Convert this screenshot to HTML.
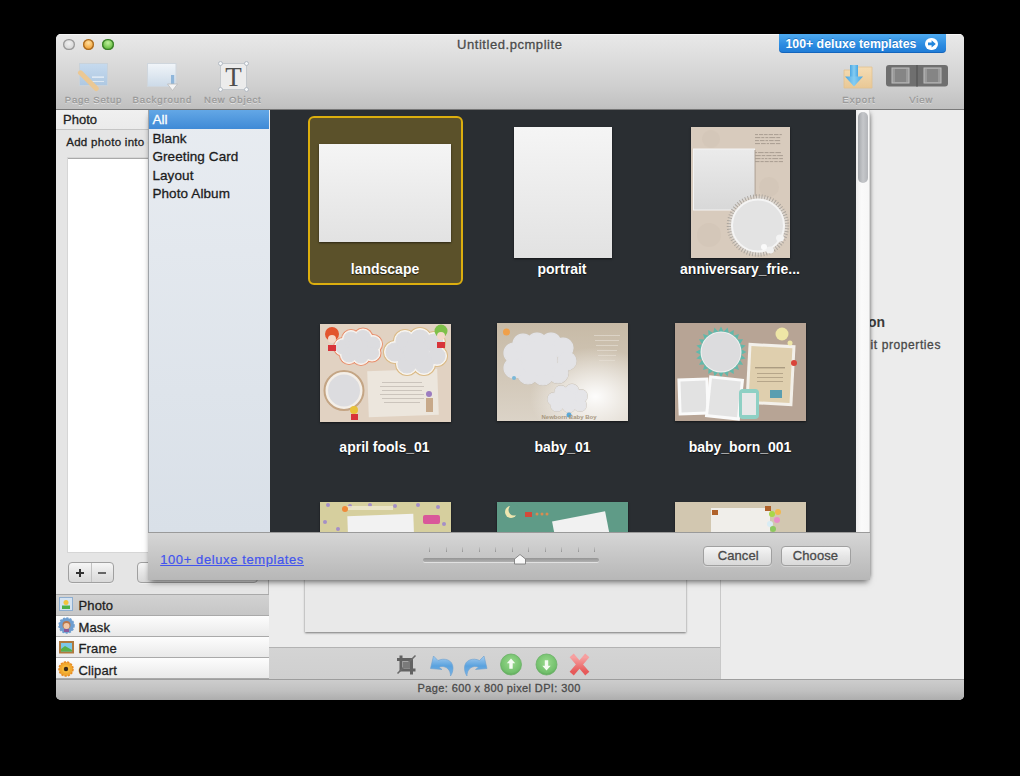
<!DOCTYPE html>
<html><head><meta charset="utf-8"><style>
*{margin:0;padding:0;box-sizing:border-box}
html,body{width:1020px;height:776px;overflow:hidden;background:#000;font-family:"Liberation Sans",sans-serif}
.a{position:absolute}
.t{white-space:nowrap}
.sk{-webkit-text-stroke:.3px currentColor}
.tl{width:11.5px;height:11.5px;border-radius:50%}
.lbl{color:#a3a3a3;text-shadow:0 1px 0 rgba(255,255,255,.7)}
.acc{left:56px;width:213px;background:linear-gradient(#fdfdfd,#f3f3f3 50%,#e9e9e9);border-bottom:1px solid #a9a9a9}
.blank{background:linear-gradient(#f5f5f5,#e2e2e2);box-shadow:0 1px 2px rgba(0,0,0,.55)}
.thumb{box-shadow:0 1px 2px rgba(0,0,0,.55)}
.tlab{text-shadow:0 1px 1px rgba(0,0,0,.7)}
.btn{height:21px;border:1px solid #a0a0a0;border-radius:4px;background:linear-gradient(#f6f6f6,#e6e6e6 50%,#d9d9d9);box-shadow:0 1px 0 rgba(255,255,255,.35)}
</style></head><body>
<div class="a" style="left:56px;top:34px;width:908px;height:665.5px;background:#ececec;border-radius:5px 5px 5px 5px;overflow:hidden">
<div class="a" style="left:0;top:0;width:908px;height:76px;background:linear-gradient(#e9e9e9,#dedede 30%,#cfcfcf 70%,#c0c0c0);border-bottom:1px solid #7a7a7a;box-shadow:inset 0 1px 0 rgba(255,255,255,.55)"></div>
<div class="a" style="left:0;top:645px;width:908px;height:21px;background:linear-gradient(#cdcdcd,#c0c0c0 55%,#adadad);border-top:1px solid #9d9d9d"></div>
</div>
<div class="a tl" style="left:63.45px;top:38.9px;background:radial-gradient(circle at 50% 40%,#f0f0f0,#d8d8d8 60%,#c4c4c4);box-shadow:inset 0 0 0 1.3px #9a9a9a"></div>
<div class="a tl" style="left:82.75px;top:38.9px;background:radial-gradient(circle at 50% 35%,#ffe0a0,#f4ac48 55%,#e0902a);box-shadow:inset 0 0 0 1.3px #a86a22"></div>
<div class="a tl" style="left:102.25px;top:38.9px;background:radial-gradient(circle at 50% 35%,#bff09c,#72c44c 55%,#55a636);box-shadow:inset 0 0 0 1.3px #3a7e2a"></div>
<div class="a t sk" style="left:457.00px;top:38.40px;font-size:13px;line-height:13px;color:#4a4a4a;letter-spacing:0.55px;text-shadow:0 1px 0 rgba(255,255,255,.5)">Untitled.pcmplite</div>

<div class="a" style="left:779px;top:34px;width:167px;height:19px;border-radius:0 0 4px 4px;background:linear-gradient(#4eaaf0,#2a8ae0 60%,#1f7bd6);box-shadow:inset 0 -1px 0 rgba(0,60,140,.35)"></div>
<div class="a t" style="left:785.50px;top:37.79px;font-size:12.3px;line-height:12.3px;color:#fff;font-weight:bold;text-shadow:0 -1px 0 rgba(0,60,140,.4)">100+ deluxe templates</div>

<div class="a" style="left:925px;top:37.5px;width:12.5px;height:12.5px;border-radius:50%;background:#fff"></div>
<svg class="a" style="left:926.5px;top:39px" width="10" height="10" viewBox="0 0 10 10"><path d="M1 3.6h3.6V1.2L8.8 4.9 4.6 8.6V6.2H1z" fill="#2386dc"/></svg>
<svg class="a" style="left:76px;top:60px" width="36" height="32" viewBox="0 0 36 32">
<defs><linearGradient id="ps" x1="0" y1="0" x2="0" y2="1"><stop offset="0" stop-color="#c6daee"/><stop offset="1" stop-color="#aec8e2"/></linearGradient></defs>
<rect x="3.5" y="3.5" width="28" height="22" fill="url(#ps)" stroke="#c9d2da"/>
<rect x="16" y="16.5" width="12" height="1.2" fill="#eef4fa"/><rect x="16" y="21" width="12" height="1" fill="#dde8f2"/>
<path d="M4.5 12.8 L20.2 28.6" stroke="#ebc894" stroke-width="5" stroke-linecap="round"/>
</svg>
<svg class="a" style="left:144px;top:60px" width="36" height="34" viewBox="0 0 36 34">
<defs><linearGradient id="bgi" x1="0" y1="0" x2="0" y2="1"><stop offset="0" stop-color="#f1f5f9"/><stop offset="1" stop-color="#ccdae8"/></linearGradient></defs>
<rect x="3.5" y="3.5" width="28.5" height="23" fill="url(#bgi)" stroke="#cfd6dd"/>
<rect x="27" y="15" width="3.2" height="10" fill="#8fb6da"/>
<path d="M23.5 24h10l-5 6.5z" fill="#f4f4f4" stroke="#b9b9b9" stroke-width=".8"/>
</svg>
<svg class="a" style="left:216px;top:59px" width="36" height="35" viewBox="0 0 36 35">
<rect x="4.5" y="4.5" width="26" height="26" fill="#ececec" stroke="#c4c8cc"/>
<text x="17.5" y="26.5" text-anchor="middle" font-family="Liberation Serif" font-size="27" fill="#4e4e4e">T</text>
<g fill="#f6f8fa" stroke="#aeb6be" stroke-width=".9"><circle cx="4.5" cy="4.5" r="2"/><circle cx="30.5" cy="4.5" r="2"/><circle cx="4.5" cy="30.5" r="2"/><circle cx="30.5" cy="30.5" r="2"/></g>
</svg>
<svg class="a" style="left:842px;top:63px" width="36" height="28" viewBox="0 0 36 28">
<defs><linearGradient id="fo" x1="0" y1="0" x2="0" y2="1"><stop offset="0" stop-color="#f4dcb4"/><stop offset="1" stop-color="#e9c895"/></linearGradient></defs>
<path d="M2 7h10l2 -3h16v21H2z" fill="url(#fo)" stroke="#e2c191" stroke-width=".8"/>
<defs><linearGradient id="ar" x1="0" y1="0" x2="1" y2="0"><stop offset="0" stop-color="#4aa6e2"/><stop offset=".5" stop-color="#86cdf2"/><stop offset="1" stop-color="#4aa6e2"/></linearGradient></defs><rect x="8" y="2" width="8" height="12" fill="url(#ar)"/><path d="M3 13.5h18l-9 10z" fill="url(#ar)"/>
</svg>
<svg class="a" style="left:885px;top:64px" width="64" height="24" viewBox="0 0 64 24">
<rect x="1" y="1" width="62" height="21.5" rx="3" fill="#6f6f6f"/>
<rect x="31" y="1" width="2" height="21.5" fill="#5e5e5e"/>
<rect x="7" y="4" width="17" height="15" fill="#9a9a9a" stroke="#bdbdbd" stroke-width="1"/><rect x="10" y="5" width="11" height="13" fill="#858585"/>
<rect x="39" y="4" width="17" height="15" fill="#9a9a9a" stroke="#bdbdbd" stroke-width="1"/><rect x="42" y="5" width="11" height="13" fill="#858585"/>
</svg>
<div class="a t sk" style="left:64.80px;top:94.56px;font-size:9.5px;line-height:9.5px;color:#999999;letter-spacing:0.75px;text-shadow:0 1px 0 rgba(255,255,255,.7)">Page Setup</div>

<div class="a t sk" style="left:132.50px;top:94.56px;font-size:9.5px;line-height:9.5px;color:#999999;letter-spacing:0.9px;text-shadow:0 1px 0 rgba(255,255,255,.7)">Background</div>

<div class="a t sk" style="left:204.00px;top:94.56px;font-size:9.5px;line-height:9.5px;color:#999999;letter-spacing:0.85px;text-shadow:0 1px 0 rgba(255,255,255,.7)">New Object</div>

<div class="a t sk" style="left:842.30px;top:94.56px;font-size:9.5px;line-height:9.5px;color:#999999;letter-spacing:1.0px;text-shadow:0 1px 0 rgba(255,255,255,.7)">Export</div>

<div class="a t sk" style="left:909.30px;top:94.56px;font-size:9.5px;line-height:9.5px;color:#999999;letter-spacing:0.9px;text-shadow:0 1px 0 rgba(255,255,255,.7)">View</div>

<div class="a" style="left:56px;top:110px;width:213px;height:484px;background:#e5e5e5;border-right:1px solid #b5b5b5"></div>
<div class="a" style="left:56px;top:110px;width:213px;height:20px;background:linear-gradient(#f0f0f0,#ebebeb);border-bottom:1px solid #c5c5c5"></div>
<div class="a t sk" style="left:63.00px;top:113.00px;font-size:13px;line-height:13px;color:#222;">Photo</div>

<div class="a t sk" style="left:66.20px;top:137.27px;font-size:11.5px;line-height:11.5px;color:#222;letter-spacing:0.3px;">Add photo into current page</div>

<div class="a" style="left:68px;top:158px;width:189px;height:394px;background:#fff;border-top:1px solid #a9a9a9;box-shadow:0 0 0 1px #d6d6d6"></div>
<div class="a btn" style="left:68px;top:562px;width:46px;height:21px"></div>
<div class="a" style="left:91px;top:563px;width:1px;height:19px;background:#c2c2c2"></div>
<div class="a" style="left:76px;top:571.5px;width:8px;height:2px;background:#333"></div><div class="a" style="left:79px;top:568.5px;width:2px;height:8px;background:#333"></div>
<div class="a" style="left:98px;top:571.5px;width:8px;height:2px;background:#666"></div>
<div class="a btn" style="left:137px;top:562px;width:121px;height:21px"></div>
<div class="a" style="left:56px;top:594px;width:213px;height:1px;background:#a9a9a9"></div>
<div class="a acc" style="top:595px;height:21px;background:linear-gradient(#d2d2d2,#c6c6c6)"></div>
<div class="a t sk" style="left:78.50px;top:599.00px;font-size:13px;line-height:13px;color:#1f1f1f;letter-spacing:0.15px;">Photo</div>

<div class="a acc" style="top:616px;height:21px;"></div>
<div class="a t sk" style="left:78.50px;top:620.50px;font-size:13px;line-height:13px;color:#1f1f1f;letter-spacing:0.15px;">Mask</div>

<div class="a acc" style="top:637px;height:21px;"></div>
<div class="a t sk" style="left:78.50px;top:642.00px;font-size:13px;line-height:13px;color:#1f1f1f;letter-spacing:0.15px;">Frame</div>

<div class="a acc" style="top:658px;height:21px;"></div>
<div class="a t sk" style="left:78.50px;top:664.00px;font-size:13px;line-height:13px;color:#1f1f1f;letter-spacing:0.15px;">Clipart</div>

<svg class="a" style="left:58px;top:596px" width="16" height="16" viewBox="0 0 16 16"><rect x="1.5" y="1.5" width="13" height="13" fill="#d5e3f1" stroke="#8eaed0"/><circle cx="8" cy="6.5" r="2.5" fill="#f2c43a"/><rect x="4" y="9.5" width="8" height="3.5" fill="#4cb04a"/></svg>
<svg class="a" style="left:58px;top:617px" width="17" height="17" viewBox="0 0 17 17"><circle cx="8.5" cy="8.5" r="7.5" fill="#6e9ed0" stroke="#6e9ed0" stroke-width="1.5" stroke-dasharray="2 1.5"/><circle cx="8.5" cy="8" r="4" fill="#b8764a"/><circle cx="8.5" cy="9" r="3" fill="#f0c8a8"/><rect x="6" y="12" width="5" height="3" fill="#8a5a9a"/></svg>
<svg class="a" style="left:58px;top:640px" width="17" height="15" viewBox="0 0 17 15"><rect x="1" y="1" width="15" height="12.5" fill="#b07a3e"/><rect x="3" y="3" width="11" height="8.5" fill="#7cc8e8"/><path d="M3 9l4-3 7 4v1.5H3z" fill="#58b048"/></svg>
<svg class="a" style="left:58px;top:661px" width="16" height="16" viewBox="0 0 16 16"><circle cx="8" cy="8" r="7" fill="#f0a830" stroke="#e88a20" stroke-width="1.5" stroke-dasharray="2.2 1.2"/><circle cx="8" cy="8" r="4" fill="#f6b83a"/><circle cx="8" cy="8" r="2.2" fill="#3a2a1a"/></svg>
<div class="a" style="left:269px;top:110px;width:451px;height:537px;background:#ececec"></div>
<div class="a" style="left:305px;top:120px;width:381px;height:512px;background:#e9e9e9;box-shadow:0 1px 2px rgba(0,0,0,.5)"></div>
<div class="a" style="left:269px;top:647px;width:451px;height:32px;background:linear-gradient(#d4d4d4,#cfcfcf);border-top:1px solid #b3b3b3"></div>
<svg class="a" style="left:394px;top:652px" width="200" height="26" viewBox="0 0 200 26">
<defs>
<radialGradient id="gr" cx=".5" cy=".4" r=".6"><stop offset="0" stop-color="#9ada8e"/><stop offset=".8" stop-color="#72c06c"/><stop offset="1" stop-color="#5fa85a"/></radialGradient>
<linearGradient id="bl" x1="0" y1="0" x2="0" y2="1"><stop offset="0" stop-color="#a6cdf0"/><stop offset=".5" stop-color="#5aa2de"/><stop offset="1" stop-color="#7ab4e6"/></linearGradient>
<linearGradient id="rd" x1="0" y1="0" x2="0" y2="1"><stop offset="0" stop-color="#f6a0a0"/><stop offset="1" stop-color="#e65a5a"/></linearGradient>
</defs>
<g fill="none" stroke="#626262" stroke-width="3"><path d="M7 3.5v14.5h14.5"/><path d="M3 7.5h14.5v15"/></g><path d="M3.5 21.5L21.5 3.5" stroke="#6a6a6a" stroke-width="1.6"/><rect x="9" y="9.5" width="7" height="7" fill="#7a7a7a"/>
<path d="M36.5 16.5L39.5 4L44 8.5C50 5.5 59 7.5 59 16C59 19 58 22 56.5 24C56.5 20 55 15.5 49 14.5C47.5 14.3 46 14.8 45 15.3L48 17.5Z" fill="url(#bl)" stroke="#6aa0d0" stroke-width=".6"/>
<path d="M93 16.5L90 4L85.5 8.5C79.5 5.5 70.5 7.5 70.5 16C70.5 19 71.5 22 73 24C73 20 74.5 15.5 80.5 14.5C82 14.3 83.5 14.8 84.5 15.3L81.5 17.5Z" fill="url(#bl)" stroke="#6aa0d0" stroke-width=".6"/>
<circle cx="117" cy="12.5" r="10.5" fill="url(#gr)" stroke="#6ab066" stroke-width=".8"/><path d="M117 6.5l4.2 4.8h-2.5v5.5h-3.4v-5.5h-2.5z" fill="#f4fbf2"/>
<circle cx="152.5" cy="12.5" r="10.5" fill="url(#gr)" stroke="#6ab066" stroke-width=".8"/><path d="M152.5 18.5l4.2-4.8h-2.5v-5.5h-3.4v5.5h-2.5z" fill="#f4fbf2"/>
<g stroke="url(#rd)" stroke-width="5.5" stroke-linecap="square"><path d="M179.5 5.5l12 14M191.5 5.5l-12 14"/></g>
</svg>
<div class="a" style="left:720px;top:110px;width:244px;height:569px;background:#ececec;border-left:1px solid #c8c8c8"></div>
<div class="a t" style="left:685.00px;width:200px;text-align:right;top:315.35px;font-size:14px;line-height:14px;color:#3a3a3a;font-weight:bold;">No Selection</div>

<div class="a t sk" style="left:641.00px;width:300px;text-align:right;top:339.34px;font-size:12px;line-height:12px;color:#484848;letter-spacing:0.6px;">Select an object to edit properties</div>

<div class="a t sk" style="left:417.60px;top:683.09px;font-size:11px;line-height:11px;color:#4a4a4a;letter-spacing:0.38px;">Page: 600 x 800 pixel DPI: 300</div>

<div class="a" style="left:148px;top:110px;width:722px;height:470px;box-shadow:0 4px 6px -2px rgba(0,0,0,.55), 3px 0 4px -3px rgba(0,0,0,.4)"></div>
<div class="a" style="left:148px;top:110px;width:122px;height:423px;background:linear-gradient(#e8ecf1,#d9e0e8);border-left:1px solid #9fa3a8"></div>
<div class="a" style="left:149px;top:110px;width:119.5px;height:18.6px;background:linear-gradient(#63a7e6,#3f8ad6)"></div>
<div class="a t" style="left:152.40px;top:112.97px;font-size:13.5px;line-height:13.5px;color:#fff;letter-spacing:0.1px;-webkit-text-stroke:.3px #fff">All</div>

<div class="a t sk" style="left:152.40px;top:131.57px;font-size:13.5px;line-height:13.5px;color:#1c1c1c;letter-spacing:0.1px;">Blank</div>

<div class="a t sk" style="left:152.40px;top:150.17px;font-size:13.5px;line-height:13.5px;color:#1c1c1c;letter-spacing:0.1px;">Greeting Card</div>

<div class="a t sk" style="left:152.40px;top:168.97px;font-size:13.5px;line-height:13.5px;color:#1c1c1c;letter-spacing:0.1px;">Layout</div>

<div class="a t sk" style="left:152.40px;top:186.97px;font-size:13.5px;line-height:13.5px;color:#1c1c1c;letter-spacing:0.1px;">Photo Album</div>

<div id="grid" class="a" style="left:270px;top:110px;width:586px;height:422px;background:#2a2e32;overflow:hidden">
<div class="a" style="left:-270px;top:-110px;width:1020px;height:776px">
  <!-- selection -->
  <div class="a" style="left:307.5px;top:115.5px;width:155.5px;height:169.5px;border:2px solid #dcae0e;border-radius:6px;background:#5b512a"></div>
  <div class="a blank" style="left:319px;top:144px;width:131.5px;height:98px"></div>
  <div class="a blank" style="left:513.5px;top:127px;width:98.5px;height:131px"></div>
  <!-- anniversary -->
  <svg class="a thumb" style="left:691px;top:127px" width="99" height="131" viewBox="0 0 99 131">
    <defs><linearGradient id="gg" x1="0" y1="0" x2="0" y2="1"><stop offset="0" stop-color="#ebebeb"/><stop offset="1" stop-color="#d8d8d8"/></linearGradient></defs>
    <rect width="99" height="131" fill="#d8cbbd"/>
    <circle cx="20" cy="12" r="9" fill="#cfc1b2" opacity=".35"/><circle cx="78" cy="60" r="10" fill="#cfc1b2" opacity=".35"/><circle cx="18" cy="108" r="12" fill="#cfc1b2" opacity=".35"/><circle cx="88" cy="110" r="7" fill="#cfc1b2" opacity=".3"/>
    <g fill="#8a7f75" opacity=".55"><rect x="64.0" y="7" width="3.0" height="1.1"/><rect x="68.0" y="7" width="4.2" height="1.1"/><rect x="73.1" y="7" width="3.5" height="1.1"/><rect x="77.6" y="7" width="4.4" height="1.1"/><rect x="83.0" y="7" width="4.5" height="1.1"/><rect x="88.5" y="7" width="2.3" height="1.1"/><rect x="64.0" y="10" width="5.3" height="1.1"/><rect x="70.3" y="10" width="3.0" height="1.1"/><rect x="74.4" y="10" width="2.9" height="1.1"/><rect x="78.3" y="10" width="6.0" height="1.1"/><rect x="85.3" y="10" width="3.9" height="1.1"/><rect x="64.0" y="13" width="3.9" height="1.1"/><rect x="68.9" y="13" width="4.6" height="1.1"/><rect x="74.5" y="13" width="2.6" height="1.1"/><rect x="78.1" y="13" width="4.5" height="1.1"/><rect x="83.6" y="13" width="5.5" height="1.1"/><rect x="64.0" y="16" width="5.0" height="1.1"/><rect x="70.0" y="16" width="4.7" height="1.1"/><rect x="75.7" y="16" width="2.3" height="1.1"/><rect x="78.9" y="16" width="5.0" height="1.1"/><rect x="84.9" y="16" width="4.4" height="1.1"/><rect x="64.0" y="25" width="2.1" height="1.1"/><rect x="67.1" y="25" width="5.5" height="1.1"/><rect x="73.6" y="25" width="3.9" height="1.1"/><rect x="78.5" y="25" width="4.9" height="1.1"/><rect x="84.4" y="25" width="5.5" height="1.1"/><rect x="64.0" y="28" width="5.7" height="1.1"/><rect x="70.7" y="28" width="3.6" height="1.1"/><rect x="75.3" y="28" width="5.2" height="1.1"/><rect x="81.5" y="28" width="3.8" height="1.1"/><rect x="86.2" y="28" width="5.7" height="1.1"/><rect x="64.0" y="31" width="5.5" height="1.1"/><rect x="70.5" y="31" width="2.4" height="1.1"/><rect x="73.9" y="31" width="2.5" height="1.1"/><rect x="77.4" y="31" width="2.9" height="1.1"/><rect x="81.3" y="31" width="5.9" height="1.1"/><rect x="88.2" y="31" width="3.7" height="1.1"/><rect x="64.0" y="34" width="4.5" height="1.1"/><rect x="69.5" y="34" width="3.2" height="1.1"/><rect x="73.7" y="34" width="4.0" height="1.1"/><rect x="78.7" y="34" width="3.5" height="1.1"/><rect x="83.3" y="34" width="3.4" height="1.1"/><rect x="87.7" y="34" width="4.3" height="1.1"/></g>
    <rect x="2.5" y="22" width="61" height="61" fill="url(#gg)" stroke="#f3f3f3" stroke-width="1"/>
    <rect x="63.5" y="23" width="1" height="61" fill="#a69a8e"/>
    <circle cx="67" cy="98.5" r="29.5" fill="#ddd6ce"/><circle cx="67" cy="98.5" r="29" fill="none" stroke="#aaa49d" stroke-width="4.5" stroke-dasharray="0.9 1.9"/>
    <circle cx="67" cy="98.5" r="26" fill="#e3e3e3" stroke="#f4f4f4" stroke-width="2"/>
    <ellipse cx="89" cy="111" rx="4" ry="3.5" fill="#f4f4f4"/><ellipse cx="79" cy="123" rx="4" ry="3.5" fill="#f0f0f0"/><ellipse cx="73" cy="120" rx="3" ry="3" fill="#fafafa"/>
  </svg>
  <!-- april fools -->
  <svg class="a thumb" style="left:320px;top:324px" width="131" height="98" viewBox="0 0 131 98">
    <rect width="131" height="98" fill="#e1d2c2"/>
    <rect x="48" y="46" width="70" height="46" fill="#ece6dd" transform="rotate(-2 83 69)"/>
    <g fill="#9b948c" opacity=".5"><rect x="62" y="58" width="40" height=".8"/><rect x="60" y="62" width="44" height=".8"/><rect x="62" y="66" width="40" height=".8"/><rect x="60" y="70" width="44" height=".8"/><rect x="62" y="74" width="42" height=".8"/><rect x="64" y="78" width="36" height=".8"/></g>
    <g fill="#e9906e"><circle cx="23" cy="23" r="10"/><circle cx="31" cy="15" r="10"/><circle cx="43" cy="14" r="10.5"/><circle cx="53" cy="20" r="10"/><circle cx="52" cy="29" r="9.5"/><circle cx="41" cy="32" r="10"/><circle cx="29" cy="31" r="10"/><circle cx="38" cy="23" r="13"/></g><g fill="#f8f5f0" stroke="#f8f5f0" stroke-width="1"><circle cx="23" cy="23" r="8.5"/><circle cx="31" cy="15" r="8.5"/><circle cx="43" cy="14" r="9.0"/><circle cx="53" cy="20" r="8.5"/><circle cx="52" cy="29" r="8.0"/><circle cx="41" cy="32" r="8.5"/><circle cx="29" cy="31" r="8.5"/><circle cx="38" cy="23" r="11.5"/></g><g fill="#dcdcdf" stroke="#dcdcdf" stroke-width="1.2"><circle cx="23" cy="23" r="7"/><circle cx="31" cy="15" r="7"/><circle cx="43" cy="14" r="7.5"/><circle cx="53" cy="20" r="7"/><circle cx="52" cy="29" r="6.5"/><circle cx="41" cy="32" r="7"/><circle cx="29" cy="31" r="7"/><circle cx="38" cy="23" r="10"/></g><g fill="#dbbb88"><circle cx="75" cy="28" r="12"/><circle cx="85" cy="17" r="12"/><circle cx="100" cy="15.5" r="12.5"/><circle cx="114" cy="19" r="12"/><circle cx="117" cy="32" r="11"/><circle cx="104" cy="40" r="12"/><circle cx="87" cy="40" r="12"/><circle cx="96" cy="28" r="16"/></g><g fill="#f8f5f0" stroke="#f8f5f0" stroke-width="1"><circle cx="75" cy="28" r="10.5"/><circle cx="85" cy="17" r="10.5"/><circle cx="100" cy="15.5" r="11.0"/><circle cx="114" cy="19" r="10.5"/><circle cx="117" cy="32" r="9.5"/><circle cx="104" cy="40" r="10.5"/><circle cx="87" cy="40" r="10.5"/><circle cx="96" cy="28" r="14.5"/></g><g fill="#dcdcdf" stroke="#dcdcdf" stroke-width="1.2"><circle cx="75" cy="28" r="9"/><circle cx="85" cy="17" r="9"/><circle cx="100" cy="15.5" r="9.5"/><circle cx="114" cy="19" r="9"/><circle cx="117" cy="32" r="8"/><circle cx="104" cy="40" r="9"/><circle cx="87" cy="40" r="9"/><circle cx="96" cy="28" r="13"/></g><circle cx="24" cy="66.5" r="19.5" fill="#f4efe8" stroke="#c4a584" stroke-width="2"/><circle cx="24" cy="66.5" r="16" fill="#dcdcdf"/>
    <circle cx="12" cy="10" r="7" fill="#e2552e"/><circle cx="12" cy="15" r="4" fill="#f3d9c9"/><rect x="8" y="21" width="8" height="6" fill="#d8343a"/>
    <circle cx="121" cy="7" r="6.5" fill="#7ec04a"/><circle cx="121" cy="12" r="4" fill="#f3d9c9"/><rect x="117" y="18" width="8" height="6" fill="#d8343a"/>
    <circle cx="34" cy="86" r="4" fill="#e8c23a"/><rect x="31" y="90" width="7" height="6" fill="#d8343a"/>
    <circle cx="109" cy="70" r="3" fill="#9c7cc0"/><rect x="106" y="74" width="7" height="14" fill="#c7a98a"/>
  </svg>
  <!-- baby_01 -->
  <svg class="a thumb" style="left:497px;top:323px" width="131" height="98" viewBox="0 0 131 98">
    <defs><linearGradient id="bb" x1="0" y1="0" x2="0" y2="1"><stop offset="0" stop-color="#c7baa6"/><stop offset="1" stop-color="#dbd3c7"/></linearGradient>
    <radialGradient id="mist" cx=".75" cy=".75" r=".5"><stop offset="0" stop-color="#fff" stop-opacity=".95"/><stop offset="1" stop-color="#fff" stop-opacity="0"/></radialGradient></defs>
    <rect width="131" height="98" fill="url(#bb)"/>
    <rect width="131" height="98" fill="url(#mist)"/>
    <g fill="#e6e0d6" opacity=".8"><rect x="97" y="12" width="26" height=".8"/><rect x="98" y="17" width="24" height=".8"/><rect x="99" y="22" width="22" height=".8"/><rect x="100" y="27" width="20" height=".8"/><rect x="101" y="32" width="18" height=".8"/><rect x="102" y="37" width="16" height=".8"/></g>
    <circle cx="9.5" cy="9" r="3.5" fill="#f0a04a"/>
    <g fill="#c9c1b5"><circle cx="17" cy="30" r="10.9"/><circle cx="26" cy="21" r="10.9"/><circle cx="40" cy="20" r="10.9"/><circle cx="54" cy="20" r="10.9"/><circle cx="66" cy="25" r="10.9"/><circle cx="70" cy="38" r="9.9"/><circle cx="61" cy="50" r="10.9"/><circle cx="46" cy="52" r="10.9"/><circle cx="31" cy="51" r="10.9"/><circle cx="17" cy="45" r="10.9"/><circle cx="42" cy="35" r="18.9"/></g><g fill="#e3e3e6" stroke="#e3e3e6" stroke-width="1.2"><circle cx="17" cy="30" r="10"/><circle cx="26" cy="21" r="10"/><circle cx="40" cy="20" r="10"/><circle cx="54" cy="20" r="10"/><circle cx="66" cy="25" r="10"/><circle cx="70" cy="38" r="9"/><circle cx="61" cy="50" r="10"/><circle cx="46" cy="52" r="10"/><circle cx="31" cy="51" r="10"/><circle cx="17" cy="45" r="10"/><circle cx="42" cy="35" r="18"/></g><g fill="#c9c1b5"><circle cx="57" cy="76" r="6.9"/><circle cx="64" cy="69" r="6.9"/><circle cx="75" cy="68" r="7.4"/><circle cx="84" cy="73" r="6.9"/><circle cx="83" cy="82" r="6.9"/><circle cx="72" cy="83" r="6.9"/><circle cx="60" cy="82" r="6.9"/><circle cx="70" cy="76" r="9.9"/></g><g fill="#e5e5e8" stroke="#e5e5e8" stroke-width="1.2"><circle cx="57" cy="76" r="6"/><circle cx="64" cy="69" r="6"/><circle cx="75" cy="68" r="6.5"/><circle cx="84" cy="73" r="6"/><circle cx="83" cy="82" r="6"/><circle cx="72" cy="83" r="6"/><circle cx="60" cy="82" r="6"/><circle cx="70" cy="76" r="9"/></g><circle cx="17" cy="55" r="2" fill="#7ab8d8"/><circle cx="72" cy="92" r="2.5" fill="#5aa8d8"/><text x="72" y="96" text-anchor="middle" font-family="Liberation Sans" font-size="6" font-weight="bold" fill="#a8987f">Newborn Baby Boy</text>
  </svg>
  <!-- baby_born -->
  <svg class="a thumb" style="left:675px;top:323px" width="131" height="98" viewBox="0 0 131 98">
    <rect width="131" height="98" fill="#b7a495"/>
    <g transform="rotate(3 95 51)"><rect x="72" y="21" width="47" height="61" fill="#f3f0ea"/><rect x="75" y="24" width="41" height="55" fill="#dfcfae"/></g>
    <g fill="#8a7b65" opacity=".6"><rect x="80" y="44" width="30" height="1.4"/><rect x="82" y="50" width="26" height=".8"/><rect x="82" y="54" width="26" height=".8"/><rect x="82" y="58" width="26" height=".8"/></g>
    <circle cx="107" cy="11" r="6.5" fill="#eee6a6"/><circle cx="115" cy="20" r="2.5" fill="#eee6a6"/>
    <polygon points="71.5,29.0 66.3,31.7 70.6,35.6 64.9,36.8 68.1,41.8 62.3,41.5 64.0,47.0 58.5,45.3 58.8,51.1 53.8,47.9 52.6,53.6 48.7,49.3 46.0,54.5 43.3,49.3 39.4,53.6 38.2,47.9 33.3,51.1 33.5,45.3 28.0,47.0 29.7,41.5 23.9,41.8 27.1,36.8 21.4,35.6 25.7,31.7 20.5,29.0 25.7,26.3 21.4,22.4 27.1,21.2 23.9,16.3 29.7,16.5 28.0,11.0 33.5,12.7 33.2,6.9 38.2,10.1 39.4,4.4 43.3,8.7 46.0,3.5 48.7,8.7 52.6,4.4 53.8,10.1 58.8,6.9 58.5,12.7 64.0,11.0 62.3,16.5 68.1,16.2 64.9,21.2 70.6,22.4 66.3,26.3" fill="#62b8aa"/>
    <circle cx="46" cy="29" r="20.5" fill="#f0f0f0"/><circle cx="46" cy="29" r="19.5" fill="#dcdcde"/>
    <rect x="3" y="55" width="31" height="37" fill="#fafafa" transform="rotate(-2 18 73)"/><rect x="6" y="58" width="25" height="31" fill="#e2e2e2" transform="rotate(-2 18 73)"/>
    <rect x="32" y="54" width="35" height="42" fill="#fafafa" transform="rotate(6 50 75)"/><rect x="35" y="57" width="29" height="36" fill="#e3e3e3" transform="rotate(6 50 75)"/>
    <rect x="64" y="66" width="20" height="30" rx="4" fill="#8ed0c4"/><rect x="67" y="70" width="14" height="22" fill="#e8e8e8"/>
    <rect x="95" y="67" width="12" height="8" fill="#5a9eb0"/><circle cx="119" cy="40" r="3" fill="#d9443a"/>
  </svg>
  <!-- row 3 -->
  <svg class="a thumb" style="left:320px;top:502px" width="131" height="98" viewBox="0 0 131 98">
    <rect width="131" height="98" fill="#d6cf9e"/>
    <g fill="#a58fc7"><circle cx="8" cy="3" r="2"/><circle cx="30" cy="4" r="2"/><circle cx="50" cy="3" r="2"/><circle cx="75" cy="4" r="2"/><circle cx="98" cy="3" r="2"/><circle cx="118" cy="5" r="2"/><circle cx="5" cy="20" r="2"/><circle cx="18" cy="27" r="2"/><circle cx="124" cy="22" r="2"/></g>
    <rect x="25" y="4" width="48" height="4" fill="#efe9cf" opacity=".8"/>
    <circle cx="25" cy="7" r="3" fill="#ef8a3a"/>
    <rect x="28" y="13" width="66" height="40" fill="#f2f2f2" transform="rotate(-2 60 33)"/>
    <rect x="103" y="13" width="17" height="9" rx="2" fill="#d9589a"/>
  </svg>
  <svg class="a thumb" style="left:497px;top:502px" width="131" height="98" viewBox="0 0 131 98">
    <rect width="131" height="98" fill="#5f9b87"/>
    <circle cx="14" cy="10" r="6" fill="#eee6b0"/><circle cx="17" cy="8" r="5.5" fill="#5f9b87"/>
    <rect x="28" y="10" width="7" height="5" fill="#d24a3a"/><g fill="#d98c50"><circle cx="40" cy="12" r="1.5"/><circle cx="45" cy="12" r="1.5"/><circle cx="50" cy="12" r="1.5"/></g>
    <rect x="58" y="14" width="54" height="36" fill="#f1f1f1" transform="rotate(-11 85 32)"/>
  </svg>
  <svg class="a thumb" style="left:675px;top:502px" width="131" height="98" viewBox="0 0 131 98">
    <rect width="131" height="98" fill="#d2c7b0"/>
    <rect x="36" y="6" width="59" height="40" fill="#f0eeea"/>
    <rect x="37" y="8" width="6" height="5" fill="#b0622a"/><rect x="90" y="4" width="6" height="5" fill="#b0622a"/>
    <circle cx="97" cy="12" r="3" fill="#a8d848"/><circle cx="103" cy="10" r="3" fill="#f0b850"/><circle cx="102" cy="18" r="3" fill="#e890c8"/><circle cx="95" cy="22" r="3" fill="#d8ecf4"/><circle cx="98" cy="27" r="3" fill="#8cc860"/>
  </svg>
  <div class="a t" style="left:285.00px;width:200px;text-align:center;top:261.55px;font-size:14px;line-height:14px;color:#fff;font-weight:bold;text-shadow:0 1px 1px rgba(0,0,0,.7)">landscape</div>
<div class="a t" style="left:462.00px;width:200px;text-align:center;top:261.55px;font-size:14px;line-height:14px;color:#fff;font-weight:bold;text-shadow:0 1px 1px rgba(0,0,0,.7)">portrait</div>
<div class="a t" style="left:640.00px;width:200px;text-align:center;top:261.55px;font-size:14px;line-height:14px;color:#fff;font-weight:bold;text-shadow:0 1px 1px rgba(0,0,0,.7)">anniversary_frie...</div>
<div class="a t" style="left:284.50px;width:200px;text-align:center;top:440.15px;font-size:14px;line-height:14px;color:#fff;font-weight:bold;text-shadow:0 1px 1px rgba(0,0,0,.7)">april fools_01</div>
<div class="a t" style="left:462.50px;width:200px;text-align:center;top:440.15px;font-size:14px;line-height:14px;color:#fff;font-weight:bold;text-shadow:0 1px 1px rgba(0,0,0,.7)">baby_01</div>
<div class="a t" style="left:640.00px;width:200px;text-align:center;top:440.15px;font-size:14px;line-height:14px;color:#fff;font-weight:bold;text-shadow:0 1px 1px rgba(0,0,0,.7)">baby_born_001</div>

</div></div>
<div class="a" style="left:856px;top:110px;width:14px;height:423px;background:linear-gradient(90deg,#ececec,#fafafa 40%,#f7f7f7);border-right:1px solid #d8d8d8"></div>
<div class="a" style="left:858px;top:112px;width:10px;height:71px;border-radius:5px;background:linear-gradient(90deg,#a4a7ab,#c5c7ca 50%,#b3b5b9)"></div>
<div class="a" style="left:148px;top:532px;width:722px;height:48px;background:linear-gradient(#d6d6d6,#c6c6c6 50%,#b7b7b7);border-top:1px solid #9a9a9a"></div>
<div class="a t sk" style="left:160.20px;top:552.60px;font-size:13px;line-height:13px;color:#4254ee;letter-spacing:0.6px;text-decoration:underline;-webkit-text-stroke:.2px #4254ee">100+ deluxe templates</div>

<div class="a btn" style="left:703px;top:546px;width:69px;height:20px"></div>
<div class="a btn" style="left:780.5px;top:546px;width:70.5px;height:20px"></div>
<div class="a t sk" style="left:717.70px;top:549.10px;font-size:13px;line-height:13px;color:#4a4a4a;letter-spacing:0.1px;">Cancel</div>

<div class="a t sk" style="left:792.80px;top:549.10px;font-size:13px;line-height:13px;color:#4a4a4a;letter-spacing:0.1px;">Choose</div>

<div class="a" style="left:423px;top:558px;width:176px;height:3.5px;border-radius:2px;background:linear-gradient(#949494,#b0b0b0);box-shadow:0 1px 0 rgba(255,255,255,.5)"></div>
<div class="a" style="left:429.0px;top:547px;width:1px;height:4.5px;background:linear-gradient(#c4c4c4,#959595)"></div>
<div class="a" style="left:445.5px;top:547px;width:1px;height:4.5px;background:linear-gradient(#c4c4c4,#959595)"></div>
<div class="a" style="left:462.0px;top:547px;width:1px;height:4.5px;background:linear-gradient(#c4c4c4,#959595)"></div>
<div class="a" style="left:478.5px;top:547px;width:1px;height:4.5px;background:linear-gradient(#c4c4c4,#959595)"></div>
<div class="a" style="left:495.0px;top:547px;width:1px;height:4.5px;background:linear-gradient(#c4c4c4,#959595)"></div>
<div class="a" style="left:511.5px;top:547px;width:1px;height:4.5px;background:linear-gradient(#c4c4c4,#959595)"></div>
<div class="a" style="left:528.0px;top:547px;width:1px;height:4.5px;background:linear-gradient(#c4c4c4,#959595)"></div>
<div class="a" style="left:544.5px;top:547px;width:1px;height:4.5px;background:linear-gradient(#c4c4c4,#959595)"></div>
<div class="a" style="left:561.0px;top:547px;width:1px;height:4.5px;background:linear-gradient(#c4c4c4,#959595)"></div>
<div class="a" style="left:577.5px;top:547px;width:1px;height:4.5px;background:linear-gradient(#c4c4c4,#959595)"></div>
<div class="a" style="left:594.0px;top:547px;width:1px;height:4.5px;background:linear-gradient(#c4c4c4,#959595)"></div>
<svg class="a" style="left:513px;top:553px" width="14" height="12" viewBox="0 0 14 12"><path d="M7 1.5L12.5 6v5h-11V6z" fill="#fafafa" stroke="#7f7f7f" stroke-width=".9"/></svg>
</body></html>
